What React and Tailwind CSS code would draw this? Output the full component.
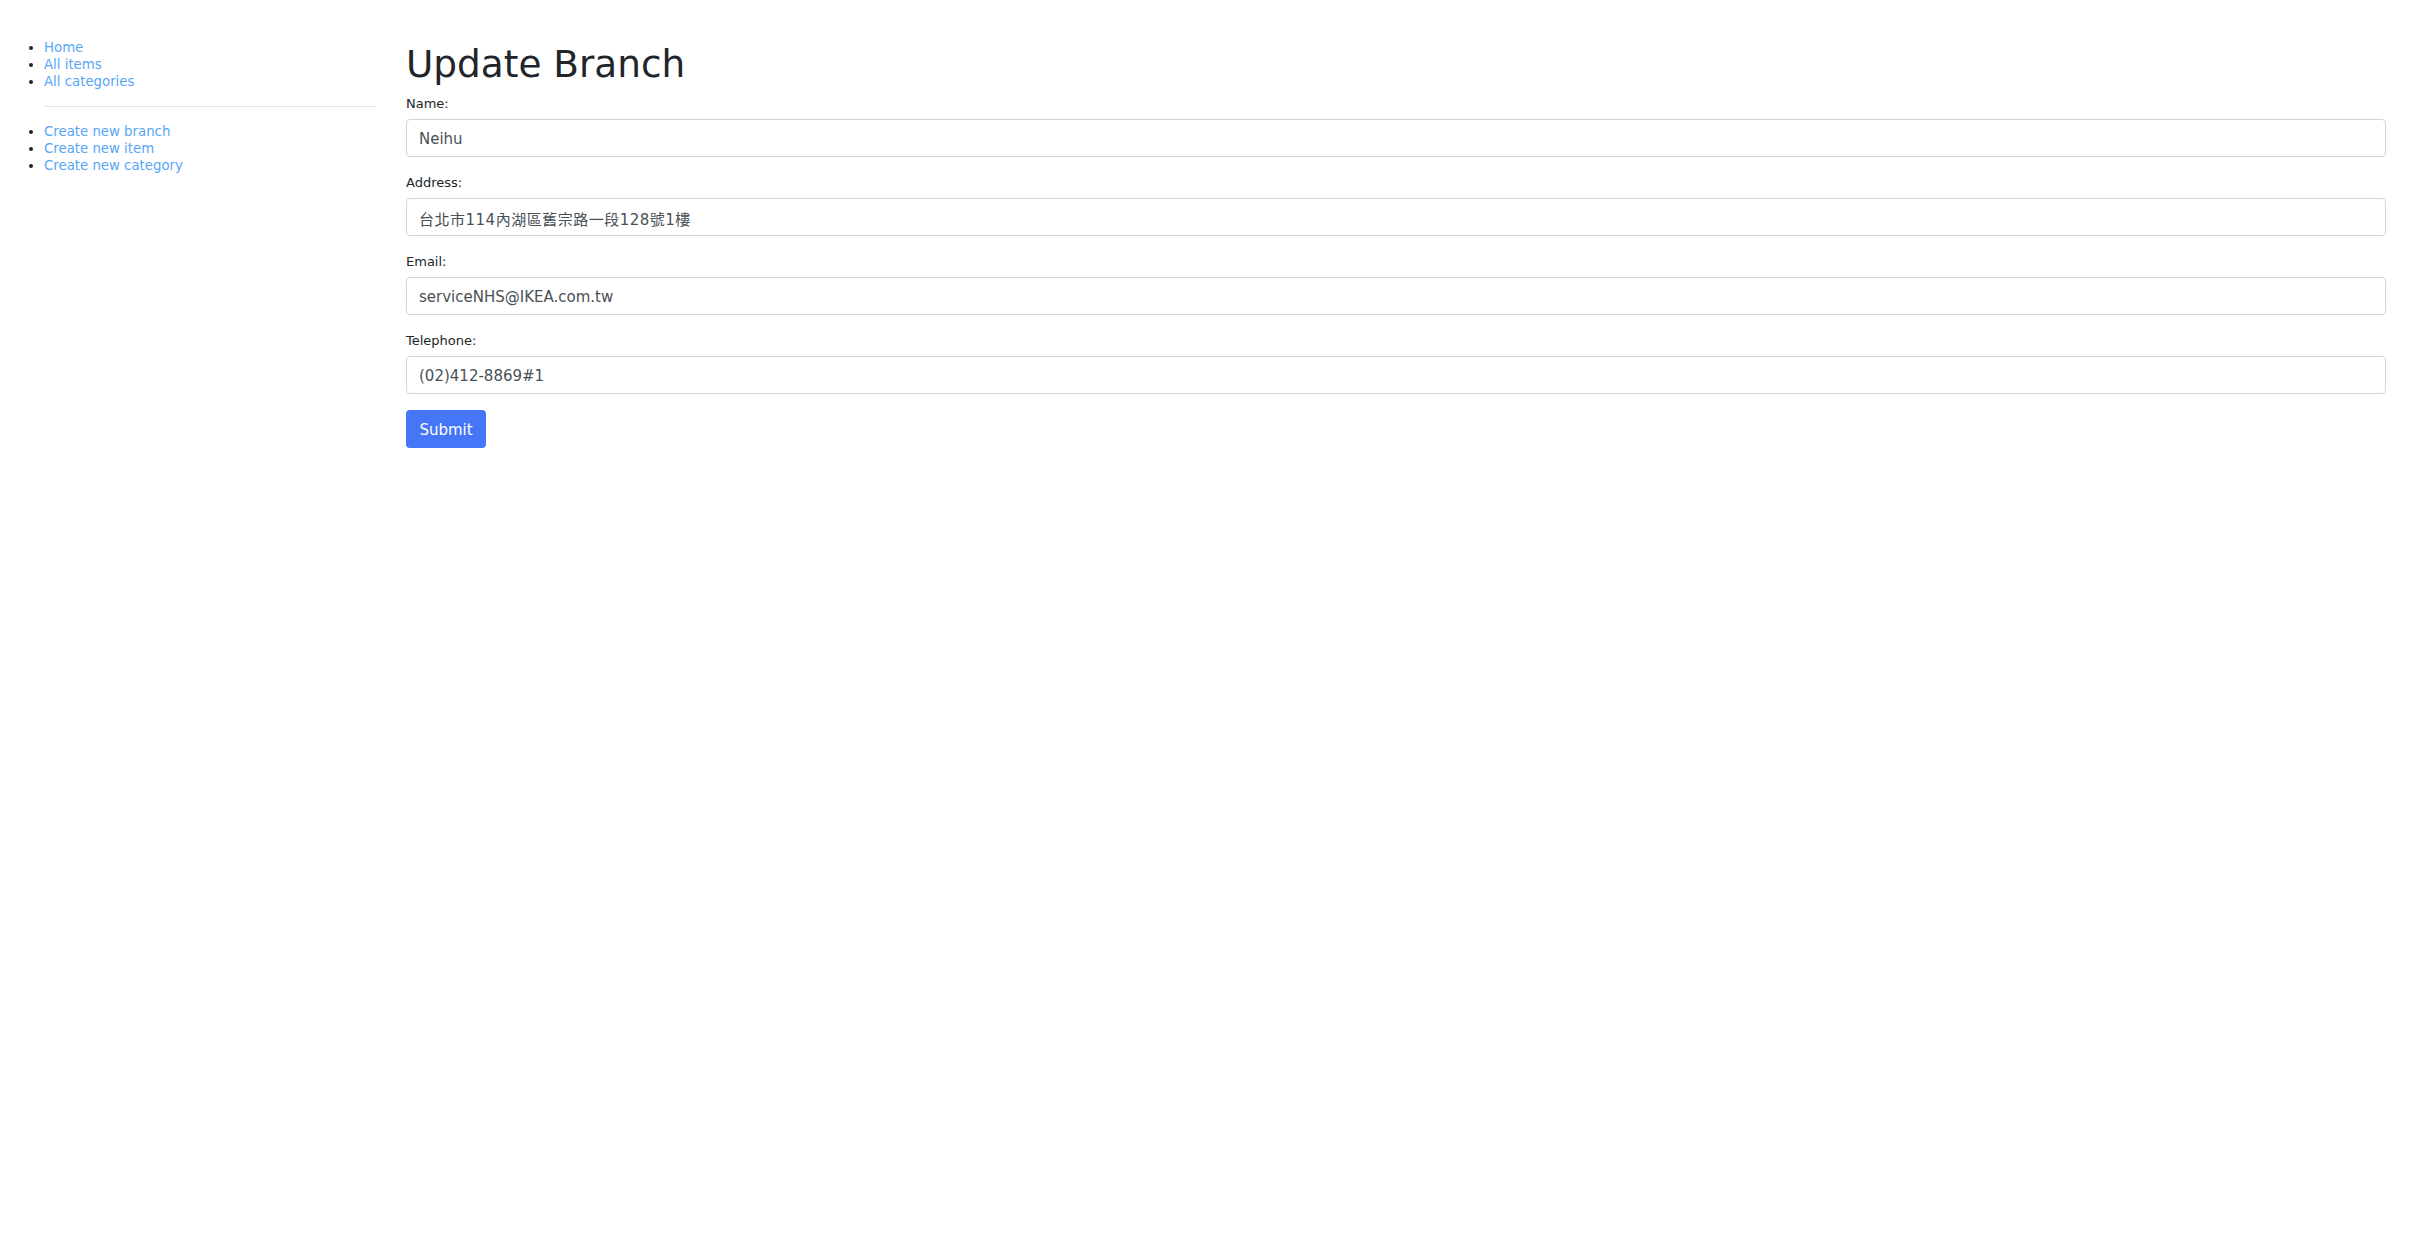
import React from "react";

const font = { fontFamily: '"DejaVu Sans", "Noto Sans CJK TC", sans-serif' };

function Field({ label, value, wide }) {
  return (
    <div className="mb-4">
      <label className="block text-[13px] leading-[20px] mb-[5px] text-[#212529]">{label}</label>
      <input
        readOnly
        defaultValue={value}
        className={
          wide
            ? "block w-full h-[38px] border border-[#ced4da] rounded-[4px] px-[12px] pt-[7px] pb-[5px] text-[15px] leading-[24px] tracking-[0.5px] text-[#495057] bg-white outline-none"
            : "block w-full h-[38px] border border-[#ced4da] rounded-[4px] px-[12px] pt-[7px] pb-[5px] text-[15px] leading-[24px] text-[#495057] bg-white outline-none"
        }
        style={font}
      />
    </div>
  );
}

export default function App() {
  const top = ["Home", "All items", "All categories"];
  const bottom = ["Create new branch", "Create new item", "Create new category"];
  return (
    <div className="flex items-start min-h-[1248px] bg-white" style={font}>
      <div className="w-[376px] shrink-0 pt-[39px]">
        <ul className="list-disc pl-[44px] text-[13.3px] leading-[17px] text-[#212529]">
          {top.map((t) => (
            <li key={t}>
              <a href="#" className="text-[#58a6f6]">{t}</a>
            </li>
          ))}
        </ul>
        <hr className="ml-[44px] my-4 border-0 border-t border-[#e3e3e3]" />
        <ul className="list-disc pl-[44px] text-[13.3px] leading-[17px] text-[#212529]">
          {bottom.map((t) => (
            <li key={t}>
              <a href="#" className="text-[#58a6f6]">{t}</a>
            </li>
          ))}
        </ul>
      </div>
      <div className="flex-1 ml-[30px] mr-[23px] pt-[42px]">
        <h1 className="text-[37.4px] leading-[44px] mb-2 text-[#212529] font-normal">Update Branch</h1>
        <Field label="Name:" value="Neihu" />
        <Field label="Address:" value="台北市114內湖區舊宗路一段128號1樓" wide />
        <Field label="Email:" value="serviceNHS@IKEA.com.tw" />
        <Field label="Telephone:" value="(02)412-8869#1" />
        <button className="h-[38px] w-[80px] rounded-[4px] bg-[#4476f7] text-white text-[15px] leading-[24px] pt-[2px]">
          Submit
        </button>
      </div>
    </div>
  );
}
